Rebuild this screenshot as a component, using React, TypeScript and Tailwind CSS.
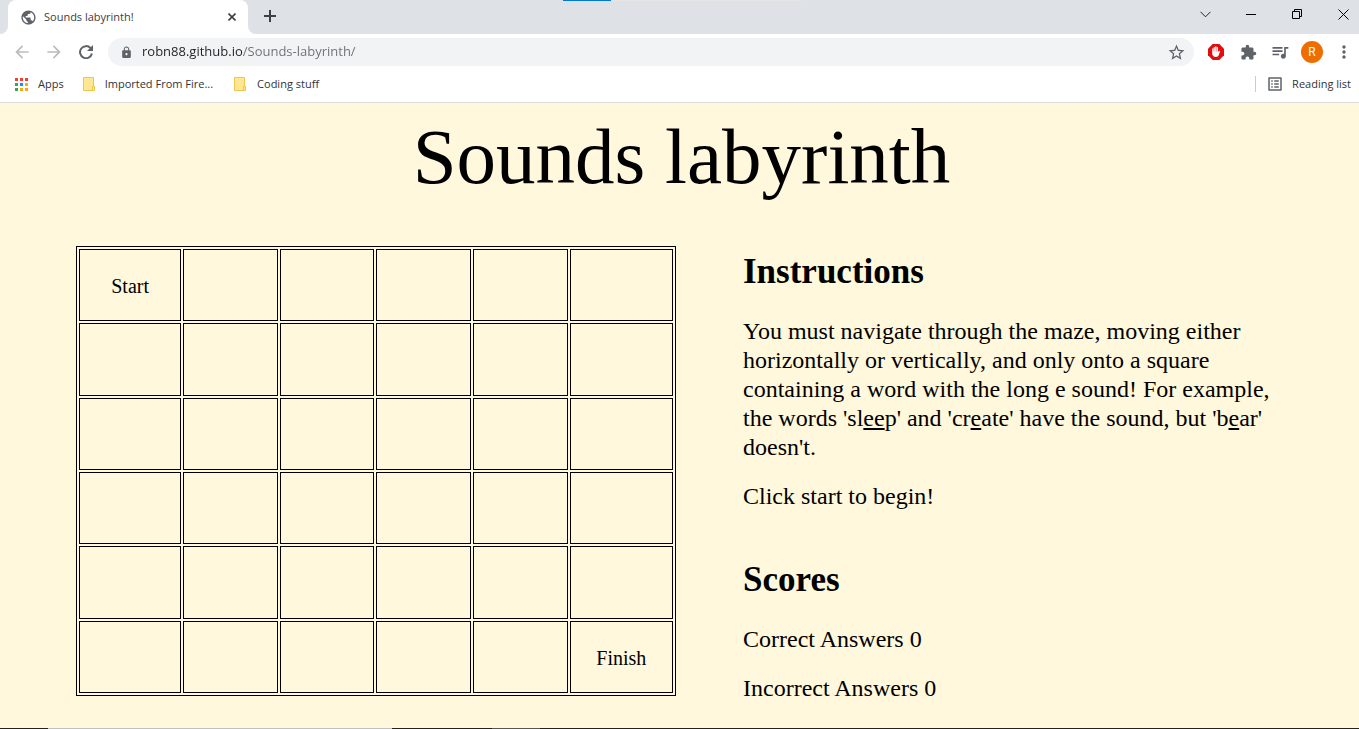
import type { ReactNode } from "react";
import {
  MdArrowBack,
  MdArrowForward,
  MdExtension,
  MdListAlt,
  MdLock,
  MdMoreVert,
  MdPublic,
  MdQueueMusic,
  MdStarBorder,
} from "react-icons/md";

const ROWS = 6;
const COLS = 6;

function IconButton({ label, className = "w-8", children }: { label: string; className?: string; children: ReactNode }) {
  return (
    <button type="button" aria-label={label} className={`flex h-8 shrink-0 items-center justify-center ${className}`}>
      {children}
    </button>
  );
}

function TabStrip() {
  return (
    <div className="relative flex h-[34px] bg-[#dee1e6]">
      <div className="absolute top-0 left-[563px] flex h-px w-60 bg-[#e5e5e5]">
        <span className="w-12 bg-[#0078d7]" />
      </div>
      <svg width="8" height="8" viewBox="0 0 8 8" fill="#fff" className="self-end">
        <path d="M8 0v8H0a8 8 0 0 0 8-8z" />
      </svg>
      <div className="flex w-60 items-center rounded-t-lg bg-white pr-2 pl-3">
        <MdPublic size={17} className="shrink-0 text-[#5f6368]" />
        <span className="ml-[7px] flex-1 text-[11px] whitespace-nowrap text-[#3c4043]">Sounds labyrinth!</span>
        <button type="button" aria-label="Close tab" className="flex h-4 w-4 items-center justify-center">
          <svg width="8" height="8" viewBox="0 0 8 8" stroke="#3c4043" strokeWidth="1.6">
            <path d="M.5.5l7 7M7.5.5l-7 7" />
          </svg>
        </button>
      </div>
      <svg width="8" height="8" viewBox="0 0 8 8" fill="#fff" className="self-end">
        <path d="M0 0v8h8a8 8 0 0 1-8-8z" />
      </svg>
      <IconButton label="New tab" className="w-7">
        <svg width="12" height="12" viewBox="0 0 12 12" stroke="#3c4043" strokeWidth="2">
          <path d="M6 0v12M0 6h12" />
        </svg>
      </IconButton>
      <div className="ml-auto flex h-7 items-center gap-[14px]">
        <IconButton label="Search tabs">
          <svg width="11" height="7" viewBox="0 0 11 7" fill="none" stroke="#222" strokeWidth="1">
            <path d="M.5.8l5 5 5-5" />
          </svg>
        </IconButton>
        <IconButton label="Minimize">
          <svg width="10" height="10" viewBox="0 0 10 10" fill="#000">
            <path d="M0 5h10v1H0z" />
          </svg>
        </IconButton>
        <IconButton label="Restore">
          <svg width="10" height="10" viewBox="0 0 10 10" fill="none" stroke="#000">
            <path d="M.5 2.5h7v7h-7zM2.5 2.5v-2h7v7h-2" />
          </svg>
        </IconButton>
        <IconButton label="Close">
          <svg width="11" height="11" viewBox="0 0 11 11" stroke="#000" strokeWidth="1">
            <path d="M.5.5l10 10M10.5.5l-10 10" />
          </svg>
        </IconButton>
      </div>
    </div>
  );
}

function Toolbar() {
  return (
    <div className="flex h-9 items-center pl-[6px] text-[#5f6368]">
      <IconButton label="Back" className="w-8 text-[#babcbe]">
        <MdArrowBack size={20} />
      </IconButton>
      <IconButton label="Forward" className="w-8 text-[#babcbe]">
        <MdArrowForward size={20} />
      </IconButton>
      <IconButton label="Reload">
        <svg width="14" height="14" viewBox="0 0 14 14">
          <path d="M11.6 3.2A6 6 0 1 0 12.9 8.500" fill="none" stroke="currentColor" strokeWidth="2" />
          <path d="M14 0v6H8z" fill="currentColor" />
        </svg>
      </IconButton>
      <div className="ml-[6px] flex h-7 min-w-0 flex-1 items-center rounded-full bg-[#f1f3f4] pr-2 pl-3">
        <MdLock size={13} className="shrink-0" />
        <input
          aria-label="Address"
          defaultValue="robn88.github.io/Sounds-labyrinth/"
          className="ml-[9px] min-w-0 flex-1 bg-linear-to-r from-[#202124] from-[100px] to-[#6b6f73] to-[100px] bg-clip-text text-[13px] text-transparent outline-none"
        />
        <button type="button" aria-label="Bookmark this page">
          <MdStarBorder size={19} />
        </button>
      </div>
      <IconButton label="Ad blocker" className="ml-[6px] w-8">
        <svg width="16" height="16" viewBox="0 0 16 16">
          <path d="M4.7 0h6.6L16 4.7v6.6L11.3 16H4.7L0 11.3V4.7z" fill="#e40d0d" />
          <path
            d="M4.2 7.4V5a.7.7 0 0 1 1.4 0V3.6a.7.7 0 0 1 1.4 0V3a.75.75 0 0 1 1.5 0v.6a.7.7 0 0 1 1.4 0v4.5l1-1.2c.5-.5 1.4 0 1.1.7l-1.3 3.7c-.5 1-1.3 1.7-2.8 1.7-2.2 0-3.7-1.3-3.7-3.5z"
            fill="#fff"
          />
          <path d="M5.6 4.5v3M7.05 3.5v4M8.5 3.5v4" stroke="#e40d0d" strokeWidth=".35" />
        </svg>
      </IconButton>
      <IconButton label="Extensions">
        <MdExtension size={17} />
      </IconButton>
      <IconButton label="Media controls">
        <MdQueueMusic size={20} />
      </IconButton>
      <IconButton label="Profile">
        <span className="flex h-[22px] w-[22px] items-center justify-center rounded-full bg-[#ef6c00] font-['Roboto',sans-serif] text-xs text-white">
          R
        </span>
      </IconButton>
      <IconButton label="Menu" className="w-[31px]">
        <MdMoreVert size={20} />
      </IconButton>
    </div>
  );
}

function FolderIcon() {
  return (
    <svg width="13" height="14" viewBox="0 0 13 14" className="shrink-0">
      <path d="M.5.5h10v9h1v4H.5z" fill="#ffe693" stroke="#ecc94a" />
      <path d="M9.5 13.5v-4h2" fill="none" stroke="#ecc94a" />
    </svg>
  );
}

function AppsIcon() {
  const colors = ["#ea4335", "#ea4335", "#ea4335", "#34a853", "#1a8cff", "#fbab04", "#34a853", "#fbab04", "#fbab04"];
  return (
    <svg width="13" height="13" viewBox="0 0 13 13" className="shrink-0">
      {colors.map((fill, i) => (
        <rect key={i} x={(i % 3) * 5} y={Math.floor(i / 3) * 5} width="3" height="3" fill={fill} />
      ))}
    </svg>
  );
}

function BookmarksBar() {
  return (
    <nav className="flex h-[33px] items-center border-b border-[#dadce0] pb-1 pl-[15px] text-[11px] whitespace-nowrap text-[#303336]">
      <button type="button" className="flex items-center gap-[10px]">
        <AppsIcon />
        Apps
      </button>
      <button type="button" className="ml-[19px] flex items-center gap-[9px]">
        <FolderIcon />
        Imported From Fire...
      </button>
      <button type="button" className="ml-[21px] flex items-center gap-[10px]">
        <FolderIcon />
        Coding stuff
      </button>
      <button type="button" className="ml-auto flex h-4 items-center gap-2 border-l border-[#c9ccd0] pr-2 pl-[10px]">
        <MdListAlt size={18} className="text-[#5f6368]" />
        Reading list
      </button>
    </nav>
  );
}

function Maze() {
  return (
    <table className="h-[450px] w-full table-fixed border-separate border-spacing-[2px] border border-black text-[20px] leading-6">
      <colgroup>
        <col className="w-[17.5%]" />
        <col span={4} />
        <col className="w-[17.7%]" />
      </colgroup>
      <tbody>
        {Array.from({ length: ROWS }, (_, row) => (
          <tr key={row}>
            {Array.from({ length: COLS }, (_, col) => (
              <td key={col} className="h-[72px] border border-black px-0 pt-[2px] pb-0 text-center align-middle">
                {row === 0 && col === 0 && (
                  <button type="button" className="block w-full">
                    Start
                  </button>
                )}
                {row === ROWS - 1 && col === COLS - 1 && "Finish"}
              </td>
            ))}
          </tr>
        ))}
      </tbody>
    </table>
  );
}

export default function App() {
  return (
    <div className="flex min-h-screen flex-col bg-[#fff8dc] font-['Open_Sans',sans-serif]">
      <header className="bg-white">
        <TabStrip />
        <Toolbar />
        <BookmarksBar />
      </header>
      <main className="flex-1 px-[76px] font-['Liberation_Serif',serif] text-black">
        <h1 className="pt-1 pb-10 pl-1 text-center text-[79px] leading-[99px]">Sounds labyrinth</h1>
        <div className="grid grid-cols-[10fr_9fr] items-start gap-[67px]">
          <Maze />
          <div className="pt-px text-[24px] leading-[29px]">
            <section>
              <h2 className="mb-5 text-[35px] leading-[50px] font-bold">Instructions</h2>
              <p className="mb-5">
                You must navigate through the maze, moving either horizontally or vertically, and only onto a square
                containing a word with the long e sound! For example, the words 'sl<u>ee</u>p' and 'cr<u>e</u>ate' have
                the sound, but 'b<u>e</u>ar' doesn't.
              </p>
              <p>Click start to begin!</p>
            </section>
            <section className="mt-11">
              <h2 className="mb-5 text-[35px] leading-[50px] font-bold">Scores</h2>
              <p className="mb-5">Correct Answers 0</p>
              <p>Incorrect Answers 0</p>
            </section>
          </div>
        </div>
      </main>
      <footer className="flex h-px bg-[#26211f]">
        <span className="ml-12 w-[344px] bg-[#c3bfc0]" />
        <span className="ml-[100px] w-12 bg-[#5a5550]" />
      </footer>
    </div>
  );
}
